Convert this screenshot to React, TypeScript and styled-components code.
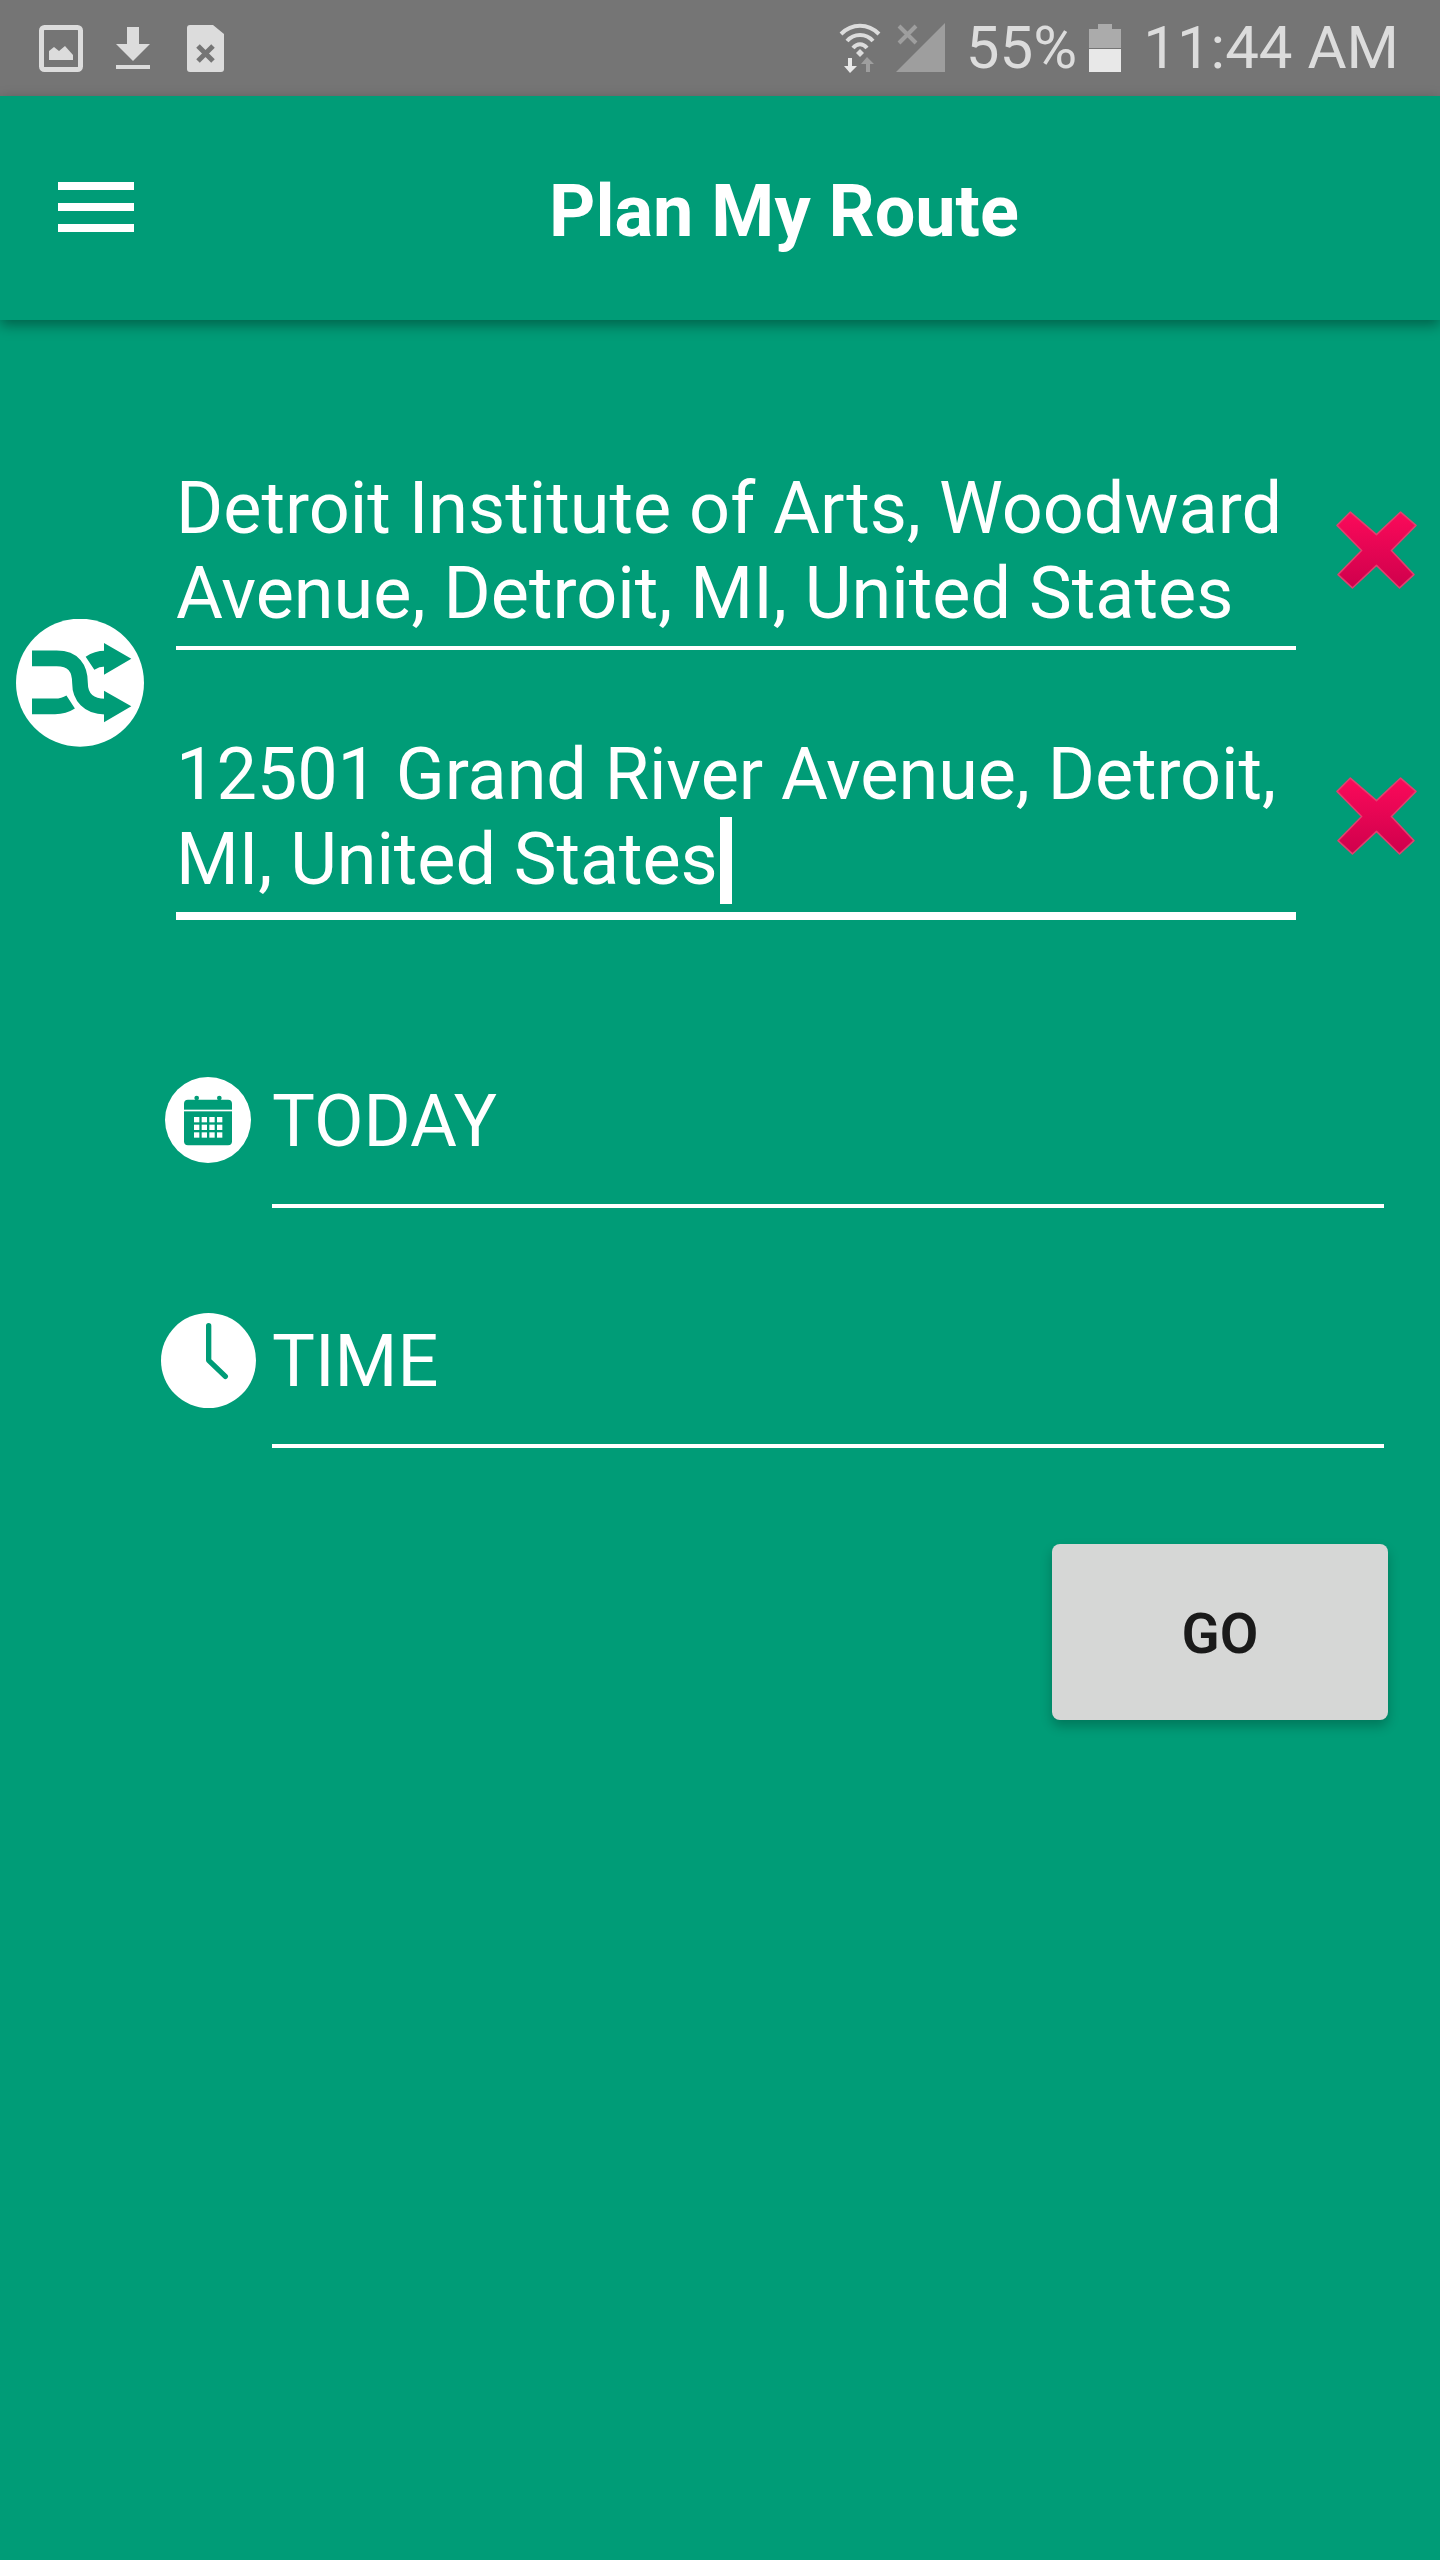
import React from 'react';
import styled, { createGlobalStyle } from 'styled-components';

const GlobalStyle = createGlobalStyle`
  html, body {
    margin: 0;
    padding: 0;
    background: #009c77;
    font-family: Roboto, "Liberation Sans", sans-serif;
  }
`;

const Page = styled.div`
  width: 1440px;
  height: 2560px;
  display: flex;
  flex-direction: column;
  background: #009c77;
  overflow: hidden;
`;

const StatusBar = styled.div`
  height: 96px;
  flex: none;
  display: flex;
  align-items: center;
  justify-content: space-between;
  padding: 0 41px 0 39px;
  background: #757575;
  color: #dcdcdc;
`;

const StatusGroup = styled.div<{ $gap: number }>`
  display: flex;
  align-items: center;
  gap: ${(p) => p.$gap}px;
`;

const StatusText = styled.span`
  font-size: 60px;
  line-height: 96px;
  font-weight: 400;
  white-space: nowrap;
`;

const Header = styled.header`
  position: relative;
  height: 224px;
  flex: none;
  display: flex;
  align-items: center;
  justify-content: center;
  box-shadow: 0 5px 13px rgba(0, 0, 0, 0.38);
`;

const MenuButton = styled.div`
  position: absolute;
  left: 58px;
  top: 86px;
  width: 76px;
  display: flex;
  flex-direction: column;
  gap: 13px;
`;

const MenuBar = styled.span`
  height: 8px;
  background: #fff;
`;

const Title = styled.h1`
  margin: 6px 0 0 128px;
  font-size: 72px;
  line-height: 85px;
  font-weight: 700;
  color: #fff;
`;

const Form = styled.main`
  display: flex;
  flex-direction: column;
  padding-top: 146px;
`;

const RouteBlock = styled.div`
  display: flex;
  align-items: center;
`;

const SwapSlot = styled.div`
  flex: none;
  width: 176px;
  padding-left: 16px;
  box-sizing: border-box;
  display: flex;
  margin-top: -20px;
`;

const Stops = styled.div`
  display: flex;
  flex-direction: column;
  gap: 82px;
`;

const Stop = styled.div`
  display: flex;
  align-items: flex-start;
`;

const AddressField = styled.div<{ $focused?: boolean }>`
  width: 1120px;
  height: ${(p) => (p.$focused ? 188 : 184)}px;
  box-sizing: border-box;
  border-bottom: ${(p) => (p.$focused ? 8 : 4)}px solid #fff;
  font-size: 72px;
  line-height: 85px;
  letter-spacing: ${(p) => (p.$focused ? '-0.08px' : 'normal')};
  color: #fff;
  white-space: pre-line;
`;

const Caret = styled.span`
  position: relative;
  display: inline-block;
  width: 12px;
  height: 0;

  &::after {
    content: '';
    position: absolute;
    left: 2px;
    bottom: -20px;
    width: 12px;
    height: 87px;
    background: #fff;
  }
`;

const ClearIcon = styled.svg`
  flex: none;
  width: 81px;
  height: 78px;
  margin: 45px 0 0 40px;
  filter: blur(0.7px);
`;

const DateTime = styled.div`
  display: flex;
  flex-direction: column;
  gap: 96px;
  margin-top: 144px;
`;

const PickerRow = styled.div`
  display: flex;
  align-items: center;
`;

const PickerIconSlot = styled.div`
  flex: none;
  width: 272px;
  padding: 0 16px 32px 160px;
  box-sizing: border-box;
  display: flex;
  justify-content: center;
`;

const PickerField = styled.div`
  width: 1112px;
  height: 144px;
  box-sizing: border-box;
  padding-top: 15px;
  border-bottom: 4px solid #fff;
  font-size: 72px;
  line-height: 85px;
  color: #fff;
`;

const Actions = styled.div`
  display: flex;
  justify-content: flex-end;
  padding: 96px 52px 0 0;
`;

const GoButton = styled.button`
  width: 336px;
  height: 176px;
  padding: 4px 0 0;
  border: 0;
  border-radius: 8px;
  background: #d6d7d6;
  color: #1a1a1a;
  font-family: inherit;
  font-size: 56px;
  font-weight: 600;
  box-shadow: 0 6px 12px rgba(0, 0, 0, 0.24);
`;

const ClearGlyph = () => (
  <ClearIcon viewBox="0 0 79 76">
    <defs>
      <linearGradient id="clearFill" x1="0" y1="0" x2="0" y2="1">
        <stop offset="0" stopColor="#fb0a5a" />
        <stop offset="1" stopColor="#cf004c" />
      </linearGradient>
    </defs>
    <path
      d="M14 1 L39.5 23 L63 1 L78 14 L54 38.5 L76 62 L62 75 L39.5 53 L16 75 L2 62 L25 38.5 L1 14 Z"
      fill="url(#clearFill)"
      stroke="#e0406f"
      strokeWidth="1.5"
      strokeLinejoin="round"
    />
  </ClearIcon>
);

export default function App() {
  return (
    <Page>
      <GlobalStyle />
      <StatusBar>
        <StatusGroup $gap={33}>
          {/* picture notification */}
          <svg width="44" height="47" viewBox="0 0 44 47">
            <rect x="2.5" y="2.5" width="39" height="42" rx="3" fill="none" stroke="#dcdcdc" strokeWidth="5" />
            <path d="M10 35 V26 L15 22 L20 26 L26 21 L34 30 V35 Z" fill="#dcdcdc" />
          </svg>
          {/* download finished, the extra width is spacing before the next icon */}
          <svg width="38" height="42" viewBox="0 0 38 42">
            <path d="M11 0 H23 V17 H34 L17 34 L0 17 H11 Z" fill="#dcdcdc" />
            <rect x="0" y="38" width="34" height="4" fill="#dcdcdc" />
          </svg>
          {/* no sim */}
          <svg width="37" height="47" viewBox="0 0 37 47">
            <path d="M3 0 H26 L37 9 V44 A3 3 0 0 1 34 47 H3 A3 3 0 0 1 0 44 V3 A3 3 0 0 1 3 0 Z" fill="#dcdcdc" />
            <path d="M11 21 L26 36 M26 21 L11 36" stroke="#757575" strokeWidth="5" />
          </svg>
        </StatusGroup>
        <StatusGroup $gap={0}>
          {/* wifi with data arrows */}
          <svg width="42" height="50" viewBox="0 0 42 50" style={{ marginRight: 15 }}>
            <path d="M2 11 C13 0 29 0 40 11" fill="none" stroke="#dcdcdc" strokeWidth="4" />
            <path d="M8 18 C15 10 27 10 34 18" fill="none" stroke="#dcdcdc" strokeWidth="4" />
            <path d="M14 25 C18 20 24 20 28 25" fill="none" stroke="#dcdcdc" strokeWidth="4" />
            <path d="M17 30 L21 26 L25 30 L21 34 Z" fill="#dcdcdc" />
            <path d="M9 35 H13 V43 H18 L11 50 L5 43 H9 Z" fill="#e8e8e8" />
            <path d="M27 49 V41 H22 L28 34 L35 41 H31 V49 Z" fill="#9e9e9e" />
          </svg>
          {/* signal with no service */}
          <svg width="50" height="50" viewBox="0 0 50 50" style={{ marginRight: 20 }}>
            <path d="M0 49 L49 0 V49 Z" fill="#9e9e9e" />
            <path d="M3 3 L20 20 M20 3 L3 20" stroke="#9e9e9e" strokeWidth="4" />
          </svg>
          <StatusText>55%</StatusText>
          {/* battery level */}
          <svg width="32" height="48" viewBox="0 0 32 48" style={{ margin: '0 22px 0 12px' }}>
            <path d="M9 0 H23 V5 H32 V24 H0 V5 H9 Z" fill="#ababab" />
            <rect x="0" y="25" width="32" height="23" fill="#e8e8e8" />
          </svg>
          <StatusText>11:44 AM</StatusText>
        </StatusGroup>
      </StatusBar>

      <Header>
        <MenuButton>
          <MenuBar />
          <MenuBar />
          <MenuBar />
        </MenuButton>
        <Title>Plan My Route</Title>
      </Header>

      <Form>
        <RouteBlock>
          <SwapSlot>
            <svg width="128" height="128" viewBox="48 118 384 384">
              <circle cx="240" cy="309" r="192" fill="#fff" />
              <g fill="none" stroke="#009c77" strokeWidth="47">
                <path d="M96 236 H170 C220 236 240 265 240 310 C240 350 265 381 315 381" />
                <path d="M96 380 H165 C185 380 198 376 212 367" />
                <path d="M270 251 C285 241 298 237 315 237" />
              </g>
              <path d="M312 333 L394 380 L312 428 Z M312 190 L394 237 L312 285 Z" fill="#009c77" />
            </svg>
          </SwapSlot>
          <Stops>
            <Stop>
              <AddressField>{'Detroit Institute of Arts, Woodward\nAvenue, Detroit, MI, United States'}</AddressField>
              <ClearGlyph />
            </Stop>
            <Stop>
              <AddressField $focused>
                {'12501 Grand River Avenue, Detroit,\nMI, United States'}
                <Caret />
              </AddressField>
              <ClearGlyph />
            </Stop>
          </Stops>
        </RouteBlock>

        <DateTime>
          <PickerRow>
            <PickerIconSlot>
              <svg width="86" height="86" viewBox="75 80 258 258">
                <circle cx="204" cy="209" r="129" fill="#fff" />
                <rect x="132" y="148" width="144" height="137" rx="12" fill="#009c77" />
                <circle cx="170" cy="143" r="7" fill="#009c77" />
                <circle cx="238" cy="143" r="7" fill="#009c77" />
                <rect x="132" y="178" width="144" height="5" fill="#fff" />
                <g fill="#fff">
                  {[200, 223, 246].flatMap((y) =>
                    [162, 185, 208, 231].map((x) => <rect key={`${x}-${y}`} x={x} y={y} width="16" height="16" />),
                  )}
                </g>
              </svg>
            </PickerIconSlot>
            <PickerField>TODAY</PickerField>
          </PickerRow>
          <PickerRow>
            <PickerIconSlot>
              <svg width="95" height="95" viewBox="61 68 285 285">
                <circle cx="203.5" cy="210.5" r="142.5" fill="#fff" />
                <path
                  d="M204 106 V210 L254 258"
                  fill="none"
                  stroke="#009c77"
                  strokeWidth="16"
                  strokeLinecap="round"
                  strokeLinejoin="round"
                />
              </svg>
            </PickerIconSlot>
            <PickerField>TIME</PickerField>
          </PickerRow>
        </DateTime>

        <Actions>
          <GoButton>GO</GoButton>
        </Actions>
      </Form>
    </Page>
  );
}
